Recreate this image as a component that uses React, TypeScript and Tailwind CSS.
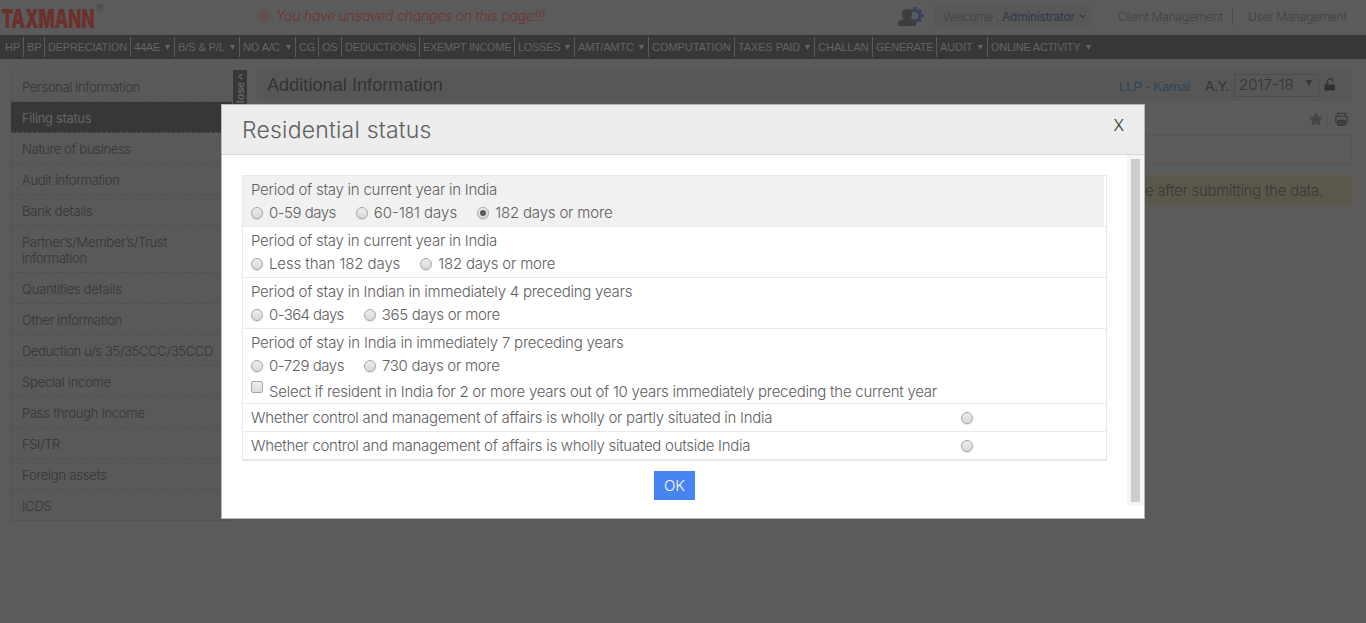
import React from "react";
import { FaStar } from "react-icons/fa";

type NavItem = { label: string; width: string; tracking: string; menu?: boolean };

const NAV: NavItem[] = [
  { label: "HP", width: "w-6", tracking: "" },
  { label: "BP", width: "w-[21px]", tracking: "" },
  { label: "DEPRECIATION", width: "w-[86px]", tracking: "tracking-[-0.23px]" },
  { label: "44AE", width: "w-11", tracking: "tracking-[-0.2px]", menu: true },
  { label: "B/S & P/L", width: "w-[65px]", tracking: "tracking-[-0.1px]", menu: true },
  { label: "NO A/C", width: "w-14", tracking: "tracking-[-0.1px]", menu: true },
  { label: "CG", width: "w-[23px]", tracking: "tracking-[-0.2px]" },
  { label: "OS", width: "w-[23px]", tracking: "tracking-[-0.2px]" },
  { label: "DEDUCTIONS", width: "w-[78px]", tracking: "tracking-[-0.15px]" },
  { label: "EXEMPT INCOME", width: "w-[95px]", tracking: "tracking-[-0.3px]" },
  { label: "LOSSES", width: "w-[60px]", tracking: "tracking-[-0.3px]", menu: true },
  { label: "AMT/AMTC", width: "w-[74px]", tracking: "tracking-[-0.2px]", menu: true },
  { label: "COMPUTATION", width: "w-[86px]", tracking: "tracking-[-0.06px]" },
  { label: "TAXES PAID", width: "w-20", tracking: "tracking-[-0.1px]", menu: true },
  { label: "CHALLAN", width: "w-[58px]", tracking: "tracking-[0px]" },
  { label: "GENERATE", width: "w-16", tracking: "tracking-[-0.3px]" },
  { label: "AUDIT", width: "w-[51px]", tracking: "tracking-[-0.1px]", menu: true },
  { label: "ONLINE ACTIVITY", width: "w-[107px]", tracking: "tracking-[-0.23px]", menu: true },
];

const SIDEBAR: { label: string; tracking: string }[] = [
  { label: "Personal information", tracking: "tracking-[-0.32px]" },
  { label: "Filing status", tracking: "tracking-[-0.35px]" },
  { label: "Nature of business", tracking: "tracking-[-0.27px]" },
  { label: "Audit information", tracking: "tracking-[-0.32px]" },
  { label: "Bank details", tracking: "tracking-[-0.2px]" },
  { label: "Partner\u2019s/Member\u2019s/Trust information", tracking: "tracking-[-0.3px]" },
  { label: "Quantities details", tracking: "tracking-[-0.2px]" },
  { label: "Other information", tracking: "tracking-[-0.32px]" },
  { label: "Deduction u/s 35/35CCC/35CCD", tracking: "tracking-[-0.33px]" },
  { label: "Special income", tracking: "tracking-[-0.23px]" },
  { label: "Pass through income", tracking: "tracking-[-0.25px]" },
  { label: "FSI/TR", tracking: "tracking-[-0.4px]" },
  { label: "Foreign assets", tracking: "tracking-[-0.2px]" },
  { label: "ICDS", tracking: "tracking-[-0.2px]" },
];

function Caret({ className }: { className: string }) {
  return (
    <svg viewBox="0 0 6 5" preserveAspectRatio="none" className={className} fill="currentColor">
      <path d="M0 0h6L3 5z" />
    </svg>
  );
}

function Logo() {
  return (
    <div className="flex w-[104px] shrink-0 items-start">
      <svg width="96" height="32" className="shrink-0">
        <text
          x="1.5"
          y="27.5"
          textLength="93"
          lengthAdjust="spacingAndGlyphs"
          className="fill-[#6b302c] font-['Inter',sans-serif] text-[26px] font-black"
        >
          TAXMANN
        </text>
      </svg>
      <span className="pt-[3px] font-['Liberation_Sans',sans-serif] text-[10px] leading-3 font-normal text-[#404040]">®</span>
    </div>
  );
}

function UserGear() {
  return (
    <svg width="26" height="20" viewBox="0 0 26 20" className="shrink-0">
      <g fill="#37425f" transform="translate(17 8.5)">
        <circle r="6.600" />
        <rect x="-1.700" y="-8.500" width="3.400" height="17" />
        <rect x="-1.700" y="-8.500" width="3.400" height="17" transform="rotate(45)" />
        <rect x="-1.700" y="-8.500" width="3.400" height="17" transform="rotate(90)" />
        <rect x="-1.700" y="-8.500" width="3.400" height="17" transform="rotate(135)" />
      </g>
      <circle cx="16.500" cy="8.500" r="3.800" fill="#5b5b5b" />
      <path
        d="M9 2c3 0 5 2.200 5 5.200 0 2-.9 3.800-2.200 4.700 2.400.9 6.200 1.900 6.200 4.600V19H0v-2.500c0-2.700 3.600-3.700 6.200-4.600C4.900 11 4 9.200 4 7.200 4 4.200 6 2 9 2z"
        fill="#3d3d3d"
      />
    </svg>
  );
}

function UnlockIcon() {
  return (
    <svg width="12" height="13" viewBox="0 0 12 13" className="mb-px ml-[5px] shrink-0">
      <path d="M3.200 7V3.700C3.200 1.900 4.500.900 6 .900s2.700 1 2.700 2.600" fill="none" stroke="#363636" strokeWidth="1.300" />
      <rect x="0.500" y="6.500" width="10.500" height="6" rx="0.800" fill="#303030" />
    </svg>
  );
}

function PrinterIcon() {
  return (
    <svg width="13" height="14" viewBox="0 0 13 14" fill="none" stroke="#363636" className="shrink-0">
      <path d="M2.700 4.200V1.200h7.600v3" strokeWidth="1.100" />
      <path d="M2.700 10.500H.700V5.400c0-.700.500-1.200 1.200-1.200h9.200c.700 0 1.200.500 1.200 1.200v5.100h-2" strokeWidth="1.100" />
      <path d="M2.900 8.300h7.200v5H2.900z" fill="#414141" strokeWidth="1.100" />
    </svg>
  );
}

function Radio({ checked = false }: { checked?: boolean }) {
  return (
    <span className="flex size-3 shrink-0 items-center justify-center rounded-full border border-[#a6a6a6] bg-linear-to-b from-[#ededed] to-[#d9d9d9] shadow-[0_1px_1px_rgba(0,0,0,0.12)]">
      {checked && <span className="size-1.5 rounded-full bg-[#5a5a5a]" />}
    </span>
  );
}

type Choice = { label: string; tracking: string; checked?: boolean };

function Question({
  title,
  tracking,
  choices,
  highlighted = false,
  children,
}: {
  title: string;
  tracking: string;
  choices: Choice[];
  highlighted?: boolean;
  children?: React.ReactNode;
}) {
  return (
    <div className="border-b border-[#e9e9e9] pr-0.5">
      <div className={`min-h-[50px] px-2 pt-0.5 ${highlighted ? "bg-[#f1f1f1]" : ""}`}>
        <div className={`h-6 leading-6 whitespace-nowrap ${tracking}`}>{title}</div>
        <div className="flex h-[22px] items-center gap-5">
          {choices.map((c) => (
            <label key={c.label} className="flex items-center gap-1.5">
              <Radio checked={c.checked} />
              <span className={`leading-[22px] whitespace-nowrap ${c.tracking}`}>{c.label}</span>
            </label>
          ))}
        </div>
        {children}
      </div>
    </div>
  );
}

function Statement({ label }: { label: string }) {
  return (
    <div className="flex h-7 items-center border-b border-[#e9e9e9] pl-2">
      <span className="w-[710px] pt-0.5 tracking-[-0.28px] whitespace-nowrap">{label}</span>
      <Radio />
    </div>
  );
}

function Dialog() {
  return (
    <div className="absolute top-[104px] left-[221px] flex h-[415px] w-[924px] flex-col border border-[#b5b5b5] bg-white text-[15px] font-light text-[#606060]">
      <header className="flex h-[50px] shrink-0 items-center justify-between border-b border-[#d9d9d9] bg-[#ededed] pr-5 pl-5">
        <h2 className="pt-0.5 text-[23px] tracking-[0.2px] whitespace-nowrap">Residential status</h2>
        <button className="mb-2.5 text-base leading-5 font-light text-[#333]">X</button>
      </header>
      <div className="flex">
        <div className="w-[905px] pt-5 pl-5">
          <div className="w-[865px] border border-[#e9e9e9]">
            <Question
              highlighted
              title="Period of stay in current year in India"
              tracking="tracking-[-0.25px]"
              choices={[
                { label: "0-59 days", tracking: "tracking-[-0.5px]" },
                { label: "60-181 days", tracking: "tracking-[0px]" },
                { label: "182 days or more", tracking: "tracking-[-0.18px]", checked: true },
              ]}
            />
            <Question
              title="Period of stay in current year in India"
              tracking="tracking-[-0.25px]"
              choices={[
                { label: "Less than 182 days", tracking: "tracking-[-0.1px]" },
                { label: "182 days or more", tracking: "tracking-[-0.2px]" },
              ]}
            />
            <Question
              title="Period of stay in Indian in immediately 4 preceding years"
              tracking="tracking-[-0.24px]"
              choices={[
                { label: "0-364 days", tracking: "tracking-[-0.6px]" },
                { label: "365 days or more", tracking: "tracking-[-0.3px]" },
              ]}
            />
            <Question
              title="Period of stay in India in immediately 7 preceding years"
              tracking="tracking-[-0.22px]"
              choices={[
                { label: "0-729 days", tracking: "tracking-[-0.47px]" },
                { label: "730 days or more", tracking: "tracking-[-0.3px]" },
              ]}
            >
              <label className="flex h-[26px] items-start gap-1.5 pt-1">
                <span className="size-3 shrink-0 rounded-[2px] border border-[#a6a6a6] bg-linear-to-b from-[#ededed] to-[#dcdcdc]" />
                <span className="pt-px leading-5 tracking-[-0.245px] whitespace-nowrap">
                  Select if resident in India for 2 or more years out of 10 years immediately preceding the current year
                </span>
              </label>
            </Question>
            <Statement label="Whether control and management of affairs is wholly or partly situated in India" />
            <Statement label="Whether control and management of affairs is wholly situated outside India" />
          </div>
          <div className="flex w-[865px] justify-center pt-2.5">
            <button className="h-[29px] w-[41px] bg-[#4684f2] pt-px text-[15px] font-light text-white">OK</button>
          </div>
        </div>
        <div className="flex h-[351px] w-[17px] justify-center bg-[#f5f5f5] pt-1">
          <div className="h-[343px] w-[9px] bg-[#cdcdcd]" />
        </div>
      </div>
    </div>
  );
}

export default function App() {
  return (
    <div className="relative h-[623px] w-[1366px] overflow-hidden bg-[#5b5b5b] font-['Inter','Liberation_Sans',sans-serif]">
      <header className="flex h-[35px] items-start text-xs font-light text-[#404040]">
        <Logo />
        <div className="ml-[154px] flex h-8 w-[640px] items-center gap-1 text-[14px] tracking-[-0.2px] text-[#713232] italic">
          <span className="size-3.5 rounded-full bg-[#635151]" />
          <span className="whitespace-nowrap">You have unsaved changes on this page!!!</span>
        </div>
        <div className="flex h-[33px] items-center whitespace-nowrap">
          <UserGear />
          <div className="ml-2.5 flex h-[21px] w-[159px] items-center bg-[#585858] pl-[9px]">
            <span className="w-[59px] tracking-[-0.3px]">Welcome :</span>
            <span className="w-[72px] font-normal tracking-[-0.25px] text-[#2f394c]">Administrator</span>
            <svg width="7" height="5" viewBox="0 0 7 5" fill="none" stroke="#383838" strokeWidth="1.200" className="ml-[5px]">
              <path d="M0.800 0.800l2.700 2.700L6.200 0.800" />
            </svg>
          </div>
          <a className="ml-[25px] w-[114px] tracking-[-0.22px]">Client Management</a>
          <span className="h-4 w-px bg-[#4c4c4c]" />
          <a className="ml-[15px] tracking-[-0.28px]">User Management</a>
        </div>
      </header>

      <nav className="flex h-6 items-center bg-[#373737] font-['Liberation_Sans',sans-serif] text-[11px] text-[#646464]">
        {NAV.map((item, i) => (
          <div
            key={item.label}
            className={`flex h-5 shrink-0 items-center justify-between pr-1 ${i === 0 ? "pl-[5px]" : "pl-[3px]"} ${
              i < NAV.length - 1 ? "border-r border-[#5a5a5a]" : ""
            } ${item.width}`}
          >
            <span className={`whitespace-nowrap ${item.tracking}`}>{item.label}</span>
            {item.menu && <Caret className="h-[5px] w-[5px] shrink-0" />}
          </div>
        ))}
      </nav>

      <div className="flex pt-2.5">
        <aside className="ml-2.5 flex w-[223px] shrink-0 flex-col border-l border-[#555] pt-px pr-px">
          {SIDEBAR.map((item, i) => (
            <a
              key={item.label}
              className={`border-b border-dashed border-[#505050] pl-[11px] text-[13px] leading-4 ${item.tracking} ${
                i === 0 ? "pt-[9px] pb-1.5" : "pt-2 pb-1.5"
              } ${i === 1 ? "bg-[#373737] font-normal text-[#646464]" : "bg-[#595959] font-light text-[#353535]"} ${
                i === 5 ? "pr-10" : "pr-3 whitespace-nowrap"
              }`}
            >
              {item.label}
            </a>
          ))}
        </aside>
        <div className="mt-px flex h-[60px] w-3.5 flex-col items-center overflow-hidden bg-[#373737] pt-[3px] font-['Liberation_Sans',sans-serif] font-bold text-[#646464]">
          <svg width="5" height="7" viewBox="0 0 5 7" fill="none" stroke="currentColor" strokeWidth="1.400" className="shrink-0">
            <path d="M4.200 0.700L1.200 3.500l3 2.800" />
          </svg>
          <span className="mt-0.5 rotate-180 text-[11px] leading-3.5 tracking-[-0.2px] [writing-mode:vertical-rl]">Close</span>
        </div>
        <main className="ml-2.5 w-[1095px]">
          <div className="flex h-8 items-center bg-[#575757] pl-2.5 font-['Liberation_Sans',sans-serif] text-[#333]">
            <h1 className="w-[852px] text-[18px] tracking-[0.08px] whitespace-nowrap">Additional Information</h1>
            <span className="w-[86px] pt-[3px] text-[13px] whitespace-nowrap text-[#2f4455]">LLP - Kamal</span>
            <span className="w-[29px] pt-0.5 text-sm tracking-[-0.2px] whitespace-nowrap">A.Y.</span>
            <div className="flex h-[23px] w-[85px] items-center justify-between border border-[#4d4d4d] pr-1.5 pl-1">
              <span className="pt-px font-['Inter',sans-serif] text-[15px] font-light">2017-18</span>
              <Caret className="mb-1 h-1.5 w-1.5" />
            </div>
            <UnlockIcon />
          </div>
          <div className="flex h-[34px] items-center justify-end pt-px pr-1">
            <FaStar className="size-3.5 text-[#464646]" />
            <span className="mr-[7px] ml-1 h-3.5 w-px bg-[#525252]" />
            <PrinterIcon />
          </div>
          <div className="h-[30px] border border-[#555]" />
          <div className="mt-2.5 flex h-[31px] items-center justify-end border border-[#63584a] bg-[#5a584b] pt-px pr-7 text-[15px] font-light tracking-[-0.27px] whitespace-nowrap text-[#383838]">
            e after submitting the data.
          </div>
        </main>
      </div>

      <Dialog />
    </div>
  );
}
